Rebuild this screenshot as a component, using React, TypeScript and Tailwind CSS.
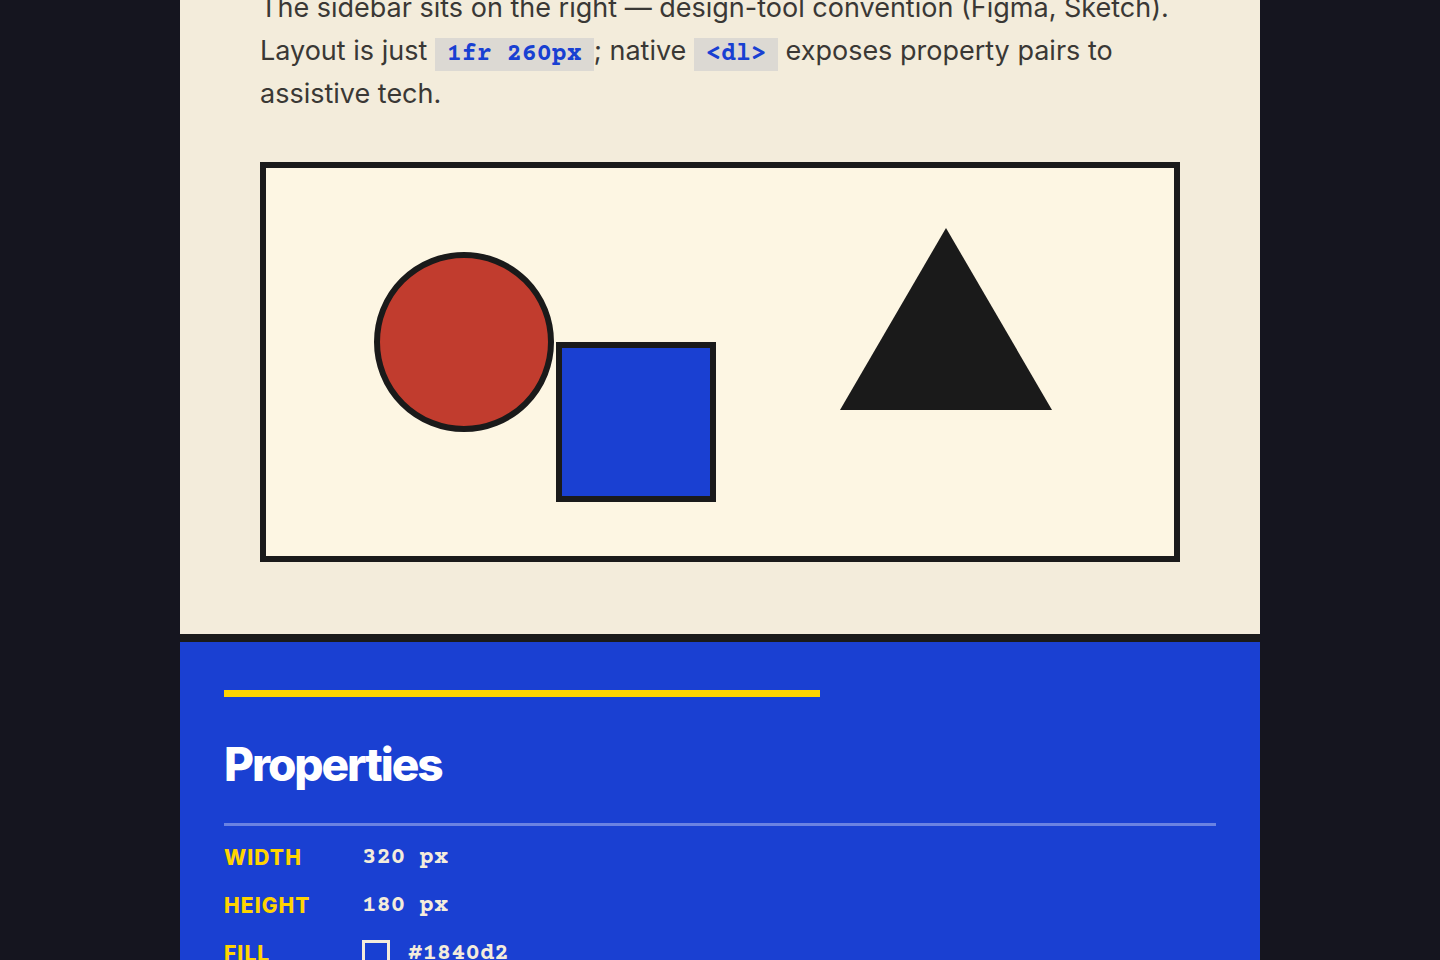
import React from 'react';

const mono = "font-['Courier_Prime','Nimbus_Mono_PS',Courier,'Liberation_Mono',monospace]";

interface Prop {
  label: string;
  value: string;
  swatch?: boolean;
}

const props: Prop[] = [
  { label: 'Width', value: '320 px' },
  { label: 'Height', value: '180 px' },
  { label: 'Fill', value: '#1840d2', swatch: true },
];

const Code: React.FC<{ children: React.ReactNode }> = ({ children }) => (
  <code className={`${mono} bg-[#dcd9d3] text-[#1840d2] font-bold px-[12px] py-[2px] text-[25px] leading-none`}>
    {children}
  </code>
);

const Canvas: React.FC = () => (
  <div className="border-[6px] border-[#1a1a1a] bg-[#fdf6e3] w-[920px] h-[400px]">
    <svg width="908" height="388" viewBox="0 0 908 388">
      <circle cx="198" cy="174" r="87" fill="#c13c2e" stroke="#1a1a1a" strokeWidth="6" />
      <rect x="293" y="177" width="154" height="154" fill="#1a40d2" stroke="#1a1a1a" strokeWidth="6" />
      <polygon points="680,60 574,242 786,242" fill="#1a1a1a" />
    </svg>
  </div>
);

const App: React.FC = () => {
  return (
    <div className="min-h-screen bg-[#15151f] font-['Inter','Noto_Sans',sans-serif]">
      <div className="mx-auto w-[1080px] overflow-hidden">
        <section className="bg-[#f3ecdb] px-[80px] pb-[72px]">
          <p className="mt-[-14px] text-[27px] leading-[43px] text-[#3a3835] max-w-[920px]">
            The sidebar sits on the right — design-tool convention (Figma, Sketch). Layout is just{' '}
            <Code>1fr 260px</Code>; native <Code>&lt;dl&gt;</Code> exposes property pairs to assistive tech.
          </p>
          <div className="mt-[47px]">
            <Canvas />
          </div>
        </section>
        <aside className="bg-[#1a40d2] border-t-[8px] border-[#1a1a1a] px-[44px] pt-[48px] pb-[40px]">
          <div className="h-[7px] w-[596px] bg-[#ffd400]" />
          <h2 className="mt-[39px] text-[46px] leading-[56px] font-extrabold tracking-[-0.045em] text-white">
            Properties
          </h2>
          <div className="mt-[31px] h-[3px] bg-[#6a82e2]" />
          <dl className="mt-[14px] grid grid-cols-[138px_1fr] gap-y-[12px]">
            {props.map((p) => (
              <React.Fragment key={p.label}>
                <dt className="h-[36px] flex items-center text-[21px] font-extrabold uppercase tracking-[0.05em] text-[#ffd400]">
                  {p.label}
                </dt>
                <dd className={`${mono} h-[36px] flex items-center gap-[18px] text-[24px] font-bold text-[#f3ecdb]`}>
                  {p.swatch && <span className="w-[28px] h-[28px] border-[3px] border-[#f3ecdb] bg-[#1840d2]" />}
                  {p.value}
                </dd>
              </React.Fragment>
            ))}
          </dl>
        </aside>
      </div>
    </div>
  );
};

export default App;
